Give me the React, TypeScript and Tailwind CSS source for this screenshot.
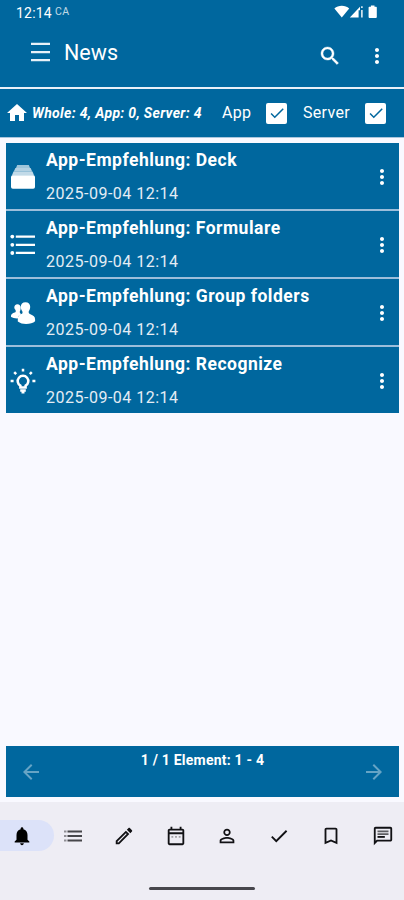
import type { ReactNode } from "react";

type IconProps = { d: string; className?: string };

function Icon({ d, className = "size-6" }: IconProps) {
  return (
    <svg viewBox="0 0 24 24" fill="currentColor" className={`shrink-0 ${className}`}>
      <path d={d} />
    </svg>
  );
}

const MORE =
  "M12 8c1.1 0 2-.9 2-2s-.9-2-2-2-2 .9-2 2 .9 2 2 2zm0 2c-1.1 0-2 .9-2 2s.9 2 2 2 2-.9 2-2-.9-2-2-2zm0 6c-1.1 0-2 .9-2 2s.9 2 2 2 2-.9 2-2-.9-2-2-2z";
const SEARCH =
  "M15.5 14h-.79l-.28-.27C15.41 12.59 16 11.11 16 9.5 16 5.91 13.09 3 9.5 3S3 5.91 3 9.5 5.91 16 9.5 16c1.61 0 3.09-.59 4.23-1.57l.27.28v.79l5 4.99L20.49 19l-4.99-5zm-6 0C7.01 14 5 11.99 5 9.5S7.01 5 9.5 5 14 7.01 14 9.5 11.99 14 9.5 14z";
const HOME = "M10 20v-6h4v6h5v-8h3L12 3 2 12h3v8z";
const BACK = "M20 11H7.83l5.59-5.59L12 4l-8 8 8 8 1.41-1.41L7.83 13H20v-2z";
const FORWARD = "M12 4l-1.41 1.41L16.17 11H4v2h12.17l-5.58 5.59L12 20l8-8z";
const BELL =
  "M12 22c1.1 0 2-.9 2-2h-4c0 1.1.89 2 2 2zm6-6v-5c0-3.07-1.64-5.64-4.5-6.32V4c0-.83-.67-1.5-1.5-1.5s-1.5.67-1.5 1.5v.68C7.63 5.36 6 7.92 6 11v5l-2 2v1h16v-1l-2-2z";
const PENCIL =
  "M14.06 9.02l.92.92L5.92 19H5v-.92l9.06-9.06M17.66 3c-.25 0-.51.1-.7.29l-1.83 1.83 3.75 3.75 1.83-1.83c.39-.39.39-1.02 0-1.41l-2.34-2.34c-.2-.2-.45-.29-.71-.29zm-3.6 3.19L3 17.25V21h3.75L17.81 9.94l-3.75-3.75z";
const CALENDAR =
  "M19 4h-1V2h-2v2H8V2H6v2H5c-1.11 0-1.99.9-1.99 2L3 20c0 1.1.89 2 2 2h14c1.1 0 2-.9 2-2V6c0-1.1-.9-2-2-2zm0 16H5V10h14v10zm0-12H5V6h14v2z";
const PERSON =
  "M12 5.9a2.1 2.1 0 110 4.2 2.1 2.1 0 010-4.2m0 9c2.97 0 6.1 1.46 6.1 2.1v1.1H5.9V17c0-.64 3.13-2.1 6.1-2.1M12 4C9.79 4 8 5.79 8 8s1.79 4 4 4 4-1.79 4-4-1.79-4-4-4zm0 9c-2.67 0-8 1.34-8 4v3h16v-3c0-2.66-5.33-4-8-4z";
const CHECK = "M9 16.17L4.83 12l-1.42 1.41L9 19 21 7l-1.41-1.41z";
const BOOKMARK =
  "M17 3H7c-1.1 0-2 .9-2 2v16l7-3 7 3V5c0-1.1-.9-2-2-2zm0 15l-5-2.18L7 18V5h10v13z";
const CHAT =
  "M4 4h16v12H5.17L4 17.17V4m0-2c-1.1 0-1.99.9-1.99 2L2 22l4-4h14c1.1 0 2-.9 2-2V4c0-1.1-.9-2-2-2H4z";

function StatusBar() {
  return (
    <div className="flex h-[25px] items-center pr-[26px] pl-4 text-white">
      <span className="text-[14px] leading-none tracking-[0.2px]">12:14</span>
      <span className="ml-[3px] text-[10.5px] leading-none tracking-[0.5px] opacity-75">CA</span>
      <svg viewBox="0 0 44 14" fill="currentColor" className="-mt-px ml-auto h-[14px] w-[44px]">
        <path d="M0.4 3.4C4.2-0.1 11.4-0.1 15.200 3.4L7.8 12.6z" />
        <path d="M15.8 12.4 26 1.8v3.5h-1.4v7.1zM27.2 1.3h1.4v1.8h-1.4zM27.2 5h1.4v7.4h-1.4z" />
        <path d="M36.9 0.5h3.6v1.3h1.5q.8 0 .8.8v9.4q0 .9-.9.9h-6.400q-.9 0-.9-.9V2.6q0-.8.8-.8h1.500z" />
      </svg>
    </div>
  );
}

function Checkbox() {
  return (
    <span className="flex size-[21px] shrink-0 items-center justify-center rounded-[2px] bg-white text-[#00679e]">
      <Icon d={CHECK} className="size-[18px]" />
    </span>
  );
}

function DeckIcon() {
  return (
    <svg viewBox="0 0 26 26" fill="currentColor" className="size-[26px]">
      <path d="M7.2 1h11.600l1.200 3H6z" opacity="0.62" />
      <path d="M5.400 4h15.200l1.600 3.600H3.800z" opacity="0.7" />
      <path d="M3.500 7.600h19l1.600 4H1.900z" opacity="0.76" />
      <rect x="1" y="11.200" width="24" height="13.600" rx="1.800" />
    </svg>
  );
}

function FormsIcon() {
  return (
    <svg viewBox="0 0 26 26" fill="currentColor" className="size-[26px]">
      <circle cx="2.3" cy="4.6" r="1.9" />
      <circle cx="2.3" cy="12.8" r="1.9" />
      <circle cx="2.3" cy="21" r="1.9" />
      <path d="M5.8 3.5h19.200v2.300H5.800zM5.800 11.700H25V14H5.800zM5.800 19.800H25v2.300H5.800z" />
    </svg>
  );
}

function GroupIcon() {
  return (
    <svg viewBox="0 0 26 26" fill="currentColor" className="size-[26px]">
      <path d="M7.400 4.200c2 0 3.300 1.300 3.300 3.400 0 2-.4 3-.9 4-.2 1.300.4 2 1.400 2.600-2 .9-3 2-3.400 4.200-3 .1-4.900-.4-6.700-1.400-.5-2.900 1.600-3.600 3.600-4.400 1.200-.5 1.200-1.200.9-2.300-.5-.8-1.300-1.400-1.300-2.700 0-2.100 1.200-3.400 3.100-3.400z" />
      <path d="M15.500 2.200c3 0 4.700 1.800 4.700 4.600 0 2.300-.8 3.500-1.500 4.800-.2 1.400.4 2.100 1.700 2.700 3 1.200 4.700 2.200 4.700 5.200v1.800c-2 1.800-5.200 2.600-9 2.600-3.300 0-6-.8-8.300-2.500v-2c0-3 1-4.200 3.400-5.300 1.300-.6 1.600-1.300 1.200-2.700-.8-1.100-1.600-2.500-1.600-4.600 0-2.800 1.700-4.600 4.700-4.600z" />
    </svg>
  );
}

function BulbIcon() {
  return (
    <svg viewBox="0 0 26 26" fill="none" stroke="currentColor" strokeWidth="2.5" className="size-[26px]">
      <path d="M10.4 19.500v-1.800a5.300 5.300 0 1 1 5.200 0v1.800z" />
      <path d="M10.200 22.600h5.600M11.500 24.200h3M13 0.800v2.800M0.600 13h3M22.400 13h3M4.200 4.200l2 2M21.800 4.200l-2 2" />
    </svg>
  );
}

type NewsItem = { title: string; date: string; icon: ReactNode };

const items: NewsItem[] = [
  { title: "App-Empfehlung: Deck", date: "2025-09-04 12:14", icon: <DeckIcon /> },
  { title: "App-Empfehlung: Formulare", date: "2025-09-04 12:14", icon: <FormsIcon /> },
  { title: "App-Empfehlung: Group folders", date: "2025-09-04 12:14", icon: <GroupIcon /> },
  { title: "App-Empfehlung: Recognize", date: "2025-09-04 12:14", icon: <BulbIcon /> },
];

function NewsRow({ item }: { item: NewsItem }) {
  return (
    <li className="flex h-[66px] items-center bg-[#00679e] pr-[5px] pl-1 text-white">
      <span className="flex w-[26px] justify-center pt-px">{item.icon}</span>
      <div className="ml-[10px] flex h-full flex-1 flex-col pt-[6px]">
        <span className="text-[17.5px] leading-[22px] font-bold tracking-[0.5px]">{item.title}</span>
        <span className="mt-[13px] text-[16px] leading-5 tracking-[0.5px] text-[#e4edf5]">{item.date}</span>
      </div>
      <Icon d={MORE} className="mt-px size-6" />
    </li>
  );
}

function ListNavIcon() {
  return (
    <svg viewBox="0 0 20 14" fill="currentColor" className="h-[14px] w-5 text-[#1b1b1f]">
      <path d="M1 1.5h2.5v2H1zM1 6h2.5v2H1zM1 10.5h2.5v2H1z" opacity="0.45" />
      <path d="M4.500 1.500h14.500v2H4.500zM4.500 6h14.500v2H4.500zM4.500 10.500h14.500v2H4.500z" opacity="0.8" />
    </svg>
  );
}

function CalendarNavIcon() {
  return (
    <svg viewBox="0 0 24 24" fill="currentColor" className="size-[22px]">
      <path d={CALENDAR} />
      <path d="M7 12h2v2H7zM11 12h2v2h-2zM15 12h2v2h-2z" opacity="0.35" />
    </svg>
  );
}

function ChatNavIcon() {
  return (
    <svg viewBox="0 0 24 24" fill="currentColor" className="size-[22px]">
      <path d={CHAT} />
      <path d="M6 6h12v2H6zM6 9h12v2H6z" opacity="0.65" />
      <path d="M6 12h8v2H6z" />
    </svg>
  );
}

export default function App() {
  return (
    <div className="flex h-[900px] w-[404px] flex-col overflow-hidden bg-[#f9f9ff] font-[Roboto,sans-serif]">
      <header className="h-[89px] shrink-0 border-b-2 border-[#e8f0f8] bg-[#00679e] text-white">
        <StatusBar />
        <div className="flex h-[60px] items-center pr-[15px] pl-[31px]">
          <svg viewBox="0 0 19 20" fill="currentColor" className="-mt-[6px] h-5 w-[19px] text-[#e8f1f8]">
            <path d="M0 0.8h19v2.300H0zM0 9h19v2.300H0zM0 17h19v2.300H0z" />
          </svg>
          <h1 className="-mt-1 ml-[14px] text-[21.5px] leading-7">News</h1>
          <Icon d={SEARCH} className="mt-px ml-auto size-6 stroke-white stroke-[0.4]" />
          <Icon d={MORE} className="mt-px ml-[23px] size-6" />
        </div>
      </header>

      <div className="flex h-[49px] shrink-0 items-center border-b border-[#a9c6dd] bg-[#00679e] pl-[5px] text-white">
        <Icon d={HOME} className="size-6" />
        <span className="ml-[3px] w-[190px] text-[14px] font-bold tracking-[0.32px] italic">
          Whole: 4, App: 0, Server: 4
        </span>
        <span className="w-[44px] text-[16px] tracking-[0.3px]">App</span>
        <Checkbox />
        <span className="ml-4 w-[62px] text-[16px] tracking-[0.3px]">Server</span>
        <Checkbox />
      </div>

      <ul className="mt-[5px] mr-[5px] ml-[6px] flex flex-col gap-[2px] bg-[#9cbedb]">
        {items.map((item) => (
          <NewsRow key={item.title} item={item} />
        ))}
      </ul>

      <div className="mt-auto mr-[5px] mb-[5px] ml-[6px] flex h-[51px] shrink-0 items-center justify-between bg-[#00679e] px-[13px] text-white">
        <Icon d={BACK} className="size-6 opacity-40" />
        <span className="self-start pt-[5px] text-[14px] leading-[18px] font-bold tracking-[0.22px]">
          1 / 1 Element: 1 - 4
        </span>
        <Icon d={FORWARD} className="size-6 opacity-40" />
      </div>

      <nav className="h-[98px] shrink-0 bg-[#eeedf4] text-[#111114]">
        <div className="flex h-[67px] items-center">
          <span className="flex h-[31px] w-[54px] items-center rounded-r-full bg-[#dce2f9] pl-[11px] text-black">
            <Icon d={BELL} className="size-[22px]" />
          </span>
          <div className="ml-[9px] flex flex-1 items-center justify-between pr-[10px]">
            <ListNavIcon />
            <Icon d={PENCIL} className="size-[22px]" />
            <CalendarNavIcon />
            <Icon d={PERSON} className="size-[22px]" />
            <Icon d={CHECK} className="size-[22px]" />
            <Icon d={BOOKMARK} className="size-[22px]" />
            <ChatNavIcon />
          </div>
        </div>
        <div className="mx-auto mt-[18px] h-[3px] w-[106px] rounded-full bg-[#47464c]" />
      </nav>
    </div>
  );
}
